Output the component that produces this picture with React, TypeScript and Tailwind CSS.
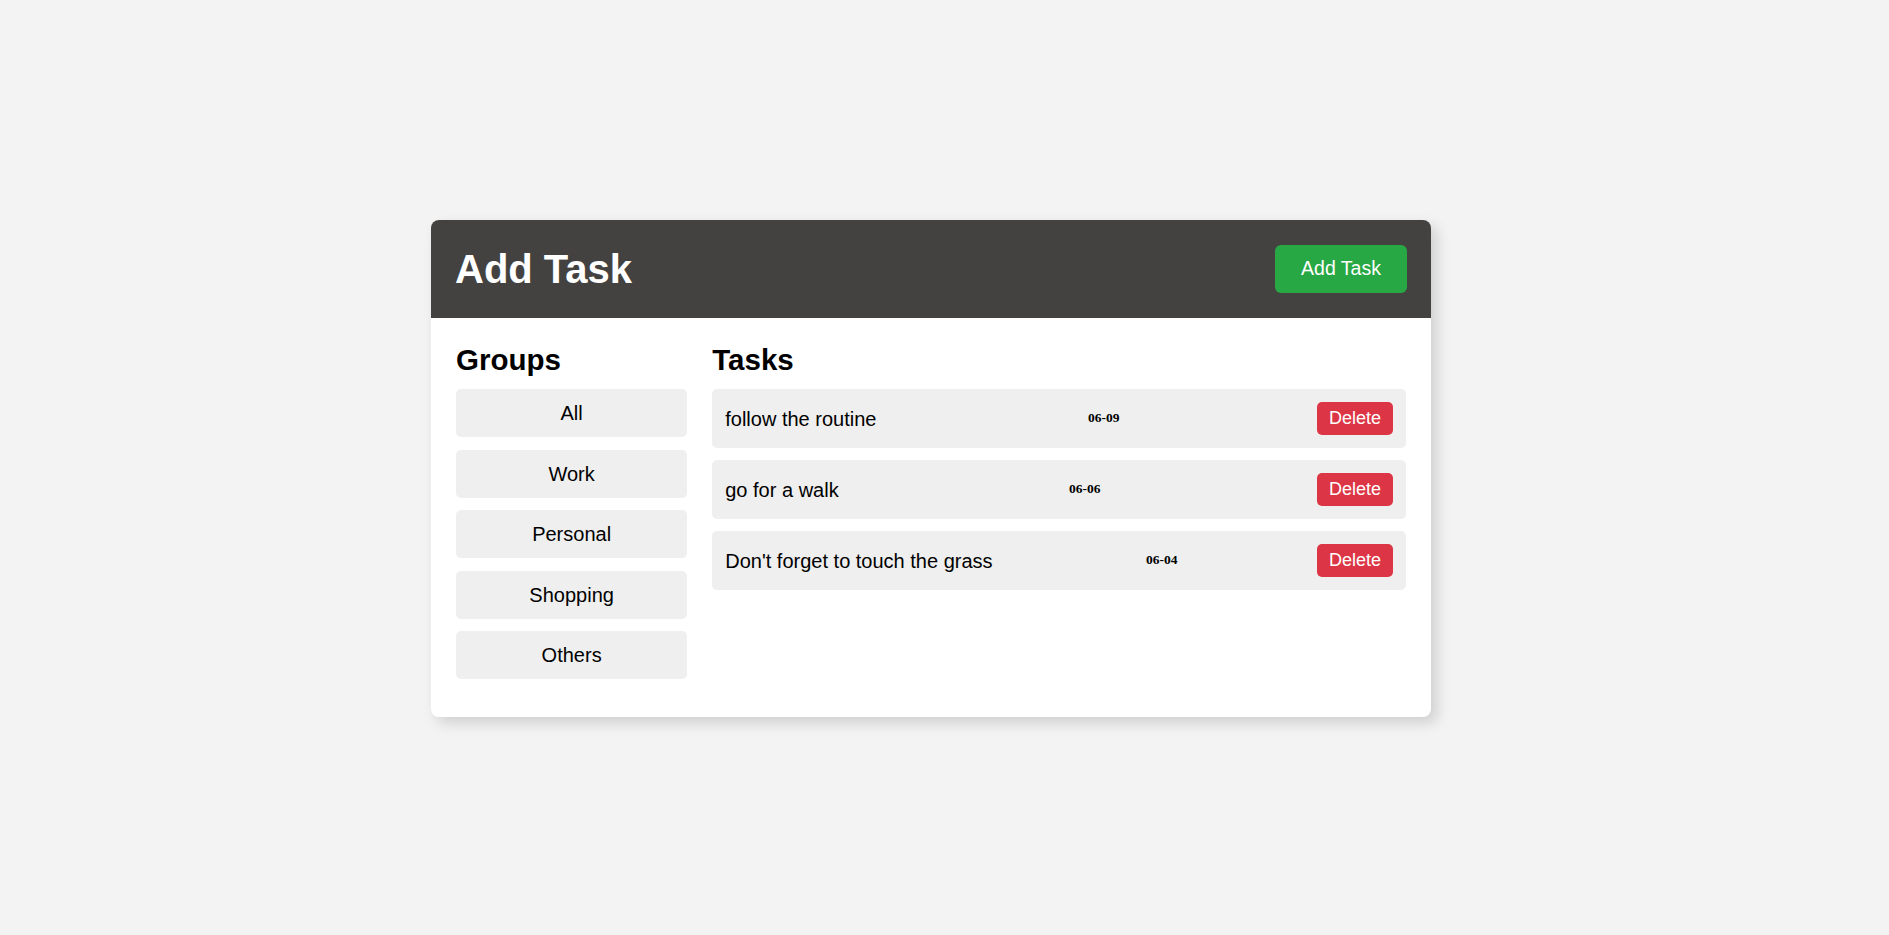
import React from "react";

const groups = ["All", "Work", "Personal", "Shopping", "Others"];
const tasks = [
  { text: "follow the routine", date: "06-09" },
  { text: "go for a walk", date: "06-06" },
  { text: "Don't forget to touch the grass", date: "06-04" },
];

export default function App() {
  return (
    <div className="h-screen w-full bg-[#f3f3f3] flex items-start pt-[220px] font-['Liberation_Sans',Arial,sans-serif]">
      <div className="ml-[431px] w-[1000px] h-[497px] bg-white rounded-lg shadow-[6px_6px_14px_rgba(0,0,0,0.15)] flex flex-col overflow-hidden">
        <div className="h-[98px] bg-[#434240] flex items-center justify-between px-[24px] shrink-0">
          <h1 className="text-white font-bold text-[40px] leading-none">Add Task</h1>
          <button className="h-[48px] w-[132px] bg-[#28a745] text-white text-[19.5px] rounded-[6px] flex items-center justify-center">
            Add Task
          </button>
        </div>
        <div className="flex gap-[25px] px-[25px] pt-[25px]">
          <div className="flex-1 flex flex-col">
            <h2 className="text-[29.5px] font-bold text-black leading-[33px] mb-[13px]">Groups</h2>
            <div className="flex flex-col gap-[12.5px]">
              {groups.map((g) => (
                <button
                  key={g}
                  className="h-[48px] w-full bg-[#efefef] rounded-[5px] text-[20px] text-black flex items-center justify-center"
                >
                  {g}
                </button>
              ))}
            </div>
          </div>
          <div className="flex-[3] flex flex-col">
            <h2 className="text-[29.5px] font-bold text-black leading-[33px] mb-[13px]">Tasks</h2>
            <div className="flex flex-col gap-[12px]">
              {tasks.map((t) => (
                <div
                  key={t.text}
                  className="h-[59px] bg-[#efefef] rounded-[5px] flex items-center justify-between px-[13px]"
                >
                  <span className="text-[20px] text-black">{t.text}</span>
                  <span className="ml-[14px] font-['Liberation_Serif','Times_New_Roman',serif] font-bold text-[13.5px] text-black">
                    {t.date}
                  </span>
                  <button className="h-[33px] px-[12px] bg-[#dc3545] text-white text-[18px] rounded-[5px] flex items-center">
                    Delete
                  </button>
                </div>
              ))}
            </div>
          </div>
        </div>
      </div>
    </div>
  );
}
